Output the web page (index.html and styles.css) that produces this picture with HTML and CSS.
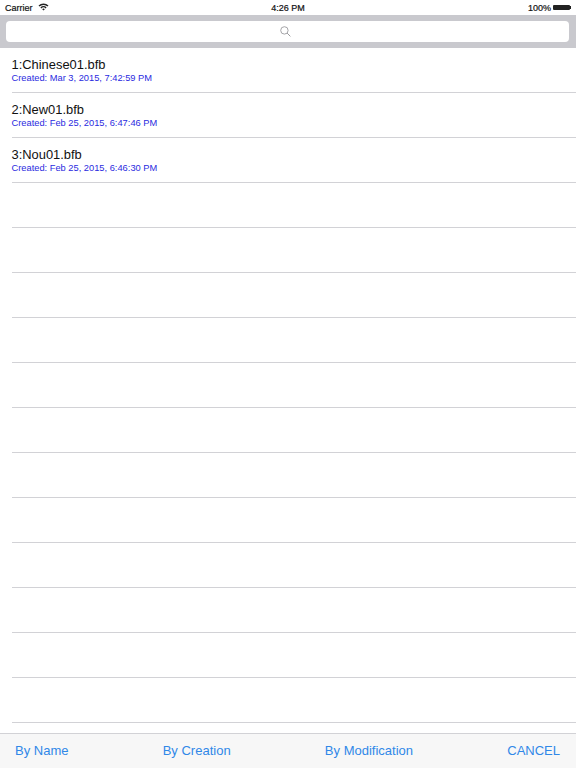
FILE: index.html
```html
<!DOCTYPE html>
<html lang="en">
<head>
    <meta charset="UTF-8">
    <meta name="viewport" content="width=device-width, initial-scale=1.0">
    <title>Files</title>
    <link rel="stylesheet" href="styles.css">
</head>
<body>
    <div class="status-bar">
        <div class="status-left">
            <span>Carrier</span>
            <svg class="wifi" width="11" height="8" viewBox="0 0 11 8">
                <path d="M0.5 2.6A7 7 0 0 1 10.5 2.6L9.5 3.6A5.6 5.6 0 0 0 1.5 3.6Z" fill="#222"/>
                <path d="M2.4 4.4A4.3 4.3 0 0 1 8.6 4.4L7.6 5.4A2.9 2.9 0 0 0 3.4 5.4Z" fill="#222"/>
                <path d="M4.2 6.2A1.8 1.8 0 0 1 6.8 6.2L5.5 7.6Z" fill="#222"/>
            </svg>
        </div>
        <div class="status-time">4:26 PM</div>
        <div class="status-right">
            <span>100%</span>
            <div class="battery"></div>
            <div class="battery-tip"></div>
        </div>
    </div>

    <div class="search-bar">
        <div class="search-input">
            <svg class="search-icon" width="11" height="11" viewBox="0 0 11 11">
                <circle cx="4.4" cy="4.4" r="3.7" fill="none" stroke="#8e8e93" stroke-width="0.8"/>
                <path d="M7.1 7.1L10.4 10.4" stroke="#8e8e93" stroke-width="0.9"/>
            </svg>
        </div>
    </div>

    <div class="file-list">
        <div class="row">
            <div class="file-name">1:Chinese01.bfb</div>
            <div class="file-date">Created: Mar 3, 2015, 7:42:59 PM</div>
        </div>
        <div class="row">
            <div class="file-name">2:New01.bfb</div>
            <div class="file-date">Created: Feb 25, 2015, 6:47:46 PM</div>
        </div>
        <div class="row">
            <div class="file-name">3:Nou01.bfb</div>
            <div class="file-date">Created: Feb 25, 2015, 6:46:30 PM</div>
        </div>
        <div class="row"></div>
        <div class="row"></div>
        <div class="row"></div>
        <div class="row"></div>
        <div class="row"></div>
        <div class="row"></div>
        <div class="row"></div>
        <div class="row"></div>
        <div class="row"></div>
        <div class="row"></div>
        <div class="row"></div>
        <div class="row"></div>
    </div>

    <div class="toolbar">
        <span class="tool-btn">By Name</span>
        <span class="tool-btn">By Creation</span>
        <span class="tool-btn">By Modification</span>
        <span class="tool-btn">CANCEL</span>
    </div>
</body>
</html>
```

FILE: styles.css
```css
html, body {
    margin: 0;
    padding: 0;
}
body {
    width: 576px;
    height: 768px;
    overflow: hidden;
    display: flex;
    flex-direction: column;
    background: white;
    font-family: "Liberation Sans", Arial, sans-serif;
}
.status-bar {
    height: 15px;
    padding: 0 5px;
    display: grid;
    grid-template-columns: 1fr auto 1fr;
    align-items: center;
    font-size: 9px;
    color: #111;
    -webkit-text-stroke: 0.2px #111;
}
.status-left {
    display: flex;
    align-items: center;
    gap: 5px;
}
.wifi {
    margin-top: -2px;
}
.status-right {
    display: flex;
    align-items: center;
    justify-content: flex-end;
    gap: 2px;
}
.battery {
    width: 17px;
    height: 5px;
    background: #222;
    border-radius: 1px;
}
.battery-tip {
    width: 1px;
    height: 3px;
    margin-left: -2px;
    background: #222;
}
.search-bar {
    height: 33px;
    padding: 6px 7px 6px 6px;
    box-sizing: border-box;
    background-color: #c9c9ce;
}
.search-input {
    height: 21px;
    background: white;
    border-radius: 4px;
    display: flex;
    align-items: center;
    justify-content: center;
}
.search-icon {
    margin-right: 4px;
    margin-top: -1px;
}
.file-list {
    flex: 1;
}
.row {
    height: 45px;
    box-sizing: border-box;
    margin-left: 11.5px;
    padding-top: 9px;
    border-bottom: 1px solid #d2d2d6;
}
.file-name {
    font-size: 12.9px;
    line-height: 16px;
    color: #111;
}
.file-date {
    font-size: 9.3px;
    line-height: 11px;
    color: #2a2ae0;
}
.toolbar {
    height: 35px;
    box-sizing: border-box;
    padding: 0 16px 2px 15px;
    display: flex;
    align-items: center;
    justify-content: space-between;
    background-color: #f7f7f7;
    border-top: 1px solid #d2d2d6;
}
.tool-btn {
    font-size: 13px;
    color: #3088e8;
}
```
